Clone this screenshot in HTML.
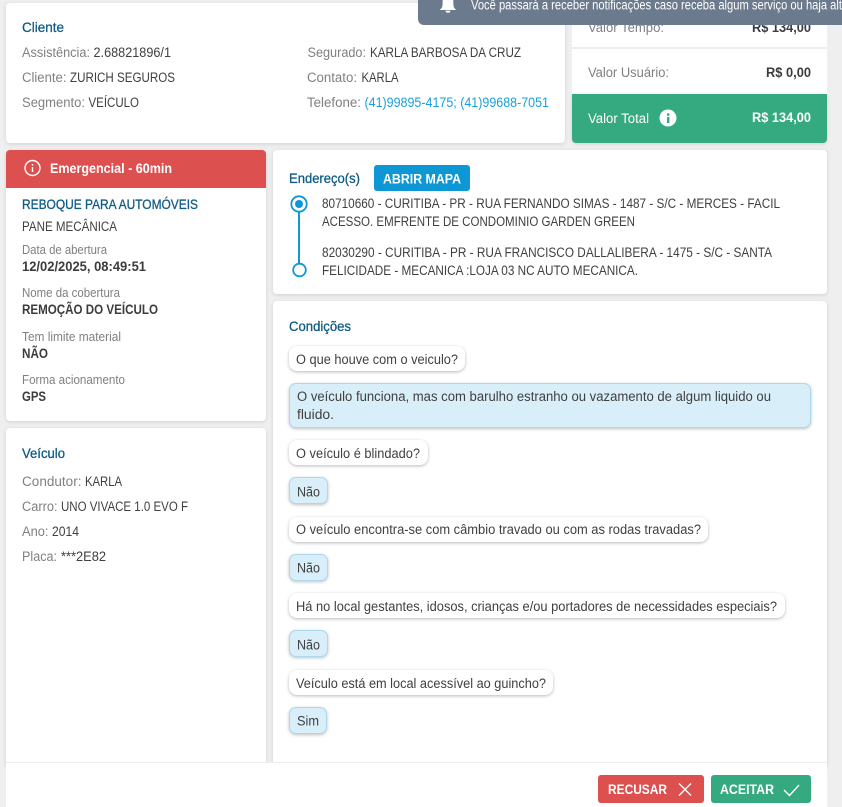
<!DOCTYPE html>
<html lang="pt-BR">
<head>
<meta charset="utf-8">
<title>Serviço</title>
<style>
html,body{margin:0;padding:0;width:842px;height:807px;overflow:hidden;background:#efefef}
body{position:relative;font-family:"Liberation Sans",sans-serif}
.c{position:absolute;background:#fff;border-radius:4px;box-shadow:0 1px 4px rgba(0,0,0,.12)}
.b{position:absolute;background:#fff;border-radius:8px;box-shadow:0 1px 3px rgba(0,0,0,.28)}
.a{position:absolute;background:#d8eef8;border:1px solid #acd9ee;box-sizing:border-box;border-radius:7px;box-shadow:0 1px 3px rgba(0,0,0,.25)}
svg{position:absolute;left:0;top:0}
text{font-family:"Liberation Sans",sans-serif;font-size:13.5px;fill:#404040}
.l{fill:#808080}
.s{font-size:12.5px;fill:#808080}
.B{font-weight:bold;fill:#3c3c3c}
.t{fill:#0f5c85;stroke:#0f5c85;stroke-width:.3px}
.w{fill:#fff;font-weight:bold}
.p{fill:#1a9fdb}
</style>
</head>
<body>
<div class="c" style="left:6px;top:3px;width:559px;height:140px"></div>
<div class="c" style="left:572px;top:0;width:255px;height:47px;box-shadow:none;border-radius:0"></div>
<div class="c" style="left:572px;top:49px;width:255px;height:45px;border-radius:0;box-shadow:none"></div>
<div class="c" style="left:572px;top:94px;width:255px;height:49px;background:#35aa80;border-radius:0 0 4px 4px"></div>
<div class="c" style="left:6px;top:150px;width:260px;height:271px"></div>
<div style="position:absolute;left:6px;top:150px;width:260px;height:38px;background:#dc5050;border-radius:4px 4px 0 0"></div>
<div class="c" style="left:6px;top:428px;width:260px;height:340px"></div>
<div class="c" style="left:273px;top:150px;width:554px;height:144px"></div>
<div class="c" style="left:273px;top:301px;width:554px;height:467px"></div>
<div style="position:absolute;left:6px;top:762px;width:821px;height:45px;background:#fff;border-top:1px solid #ececec;box-sizing:border-box"></div>
<div style="position:absolute;left:374px;top:165px;width:96px;height:26px;background:#0d98d5;border-radius:3px"></div>

<div class="b" style="left:289px;top:346px;width:176px;height:25px"></div>
<div class="a" style="left:289px;top:383px;width:522px;height:45px"></div>
<div class="b" style="left:289px;top:440px;width:139px;height:25px"></div>
<div class="a" style="left:289px;top:477px;width:39px;height:27px"></div>
<div class="b" style="left:289px;top:517px;width:419px;height:25px"></div>
<div class="a" style="left:289px;top:554px;width:39px;height:27px"></div>
<div class="b" style="left:289px;top:593px;width:496px;height:25px"></div>
<div class="a" style="left:289px;top:630px;width:39px;height:27px"></div>
<div class="b" style="left:289px;top:670px;width:264px;height:25px"></div>
<div class="a" style="left:289px;top:707px;width:38px;height:27px"></div>

<div style="position:absolute;left:598px;top:775px;width:106px;height:28px;background:#dc5050;border-radius:3px"></div>
<div style="position:absolute;left:711px;top:775px;width:100px;height:28px;background:#35aa80;border-radius:3px"></div>

<svg width="842" height="807" viewBox="0 0 842 807">
<!-- Cliente -->
<text x="22" y="32" class="t" textLength="42" lengthAdjust="spacingAndGlyphs">Cliente</text>
<text x="22" y="57" class="l" textLength="68" lengthAdjust="spacingAndGlyphs">Assistência:</text>
<text x="93.5" y="57" textLength="77.5" lengthAdjust="spacingAndGlyphs">2.68821896/1</text>
<text x="22" y="82" class="l" textLength="44.5" lengthAdjust="spacingAndGlyphs">Cliente:</text>
<text x="70" y="82" textLength="105" lengthAdjust="spacingAndGlyphs">ZURICH SEGUROS</text>
<text x="22" y="107" class="l" textLength="63" lengthAdjust="spacingAndGlyphs">Segmento:</text>
<text x="88.5" y="107" textLength="50.5" lengthAdjust="spacingAndGlyphs">VEÍCULO</text>
<text x="307.5" y="57" class="l" textLength="58.5" lengthAdjust="spacingAndGlyphs">Segurado:</text>
<text x="370" y="57" textLength="151" lengthAdjust="spacingAndGlyphs">KARLA BARBOSA DA CRUZ</text>
<text x="307" y="82" class="l" textLength="50" lengthAdjust="spacingAndGlyphs">Contato:</text>
<text x="361.5" y="82" textLength="37" lengthAdjust="spacingAndGlyphs">KARLA</text>
<text x="307" y="107" class="l" textLength="54" lengthAdjust="spacingAndGlyphs">Telefone:</text>
<text x="364.5" y="107" class="p" textLength="184.5" lengthAdjust="spacingAndGlyphs">(41)99895-4175; (41)99688-7051</text>
<!-- Valores -->
<text x="588" y="32" class="l" textLength="76" lengthAdjust="spacingAndGlyphs">Valor Tempo:</text>
<text x="752" y="32" class="B" textLength="59" lengthAdjust="spacingAndGlyphs">R$ 134,00</text>
<text x="588" y="77" class="l" textLength="81" lengthAdjust="spacingAndGlyphs">Valor Usuário:</text>
<text x="766" y="77" class="B" textLength="45" lengthAdjust="spacingAndGlyphs">R$ 0,00</text>
<text x="588" y="123" style="fill:#fff" textLength="61" lengthAdjust="spacingAndGlyphs">Valor Total</text>
<circle cx="668" cy="118" r="8.5" fill="#fff"/>
<rect x="667" y="117" width="2.4" height="6" fill="#35aa80"/>
<rect x="667" y="113.4" width="2.4" height="2.4" fill="#35aa80"/>
<text x="752" y="122" class="w" textLength="59" lengthAdjust="spacingAndGlyphs">R$ 134,00</text>
<!-- Barra notificação -->
<path d="M418 0H842V25H424a6 6 0 0 1-6-6Z" fill="#6c7a8d"/>
<path d="M440 10c0-.8 1.600-1.200 2.200-3 .5-1.800.4-5 .6-8h10.400c.2 3 .1 6.200.6 8 .6 1.800 2.200 2.200 2.200 3Z" fill="#fff"/>
<path d="M445.500 10.800h5c0 1.300-1 2-2.500 2s-2.500-.7-2.500-2Z" fill="#fff"/>
<text x="471" y="9.500" style="fill:#fff" textLength="371" lengthAdjust="spacingAndGlyphs">Você passará a receber notificações caso receba algum serviço ou haja alt</text>
<!-- Emergencial -->
<circle cx="32.500" cy="168" r="7.500" fill="none" stroke="#fff" stroke-width="1.400"/>
<rect x="31.800" y="164" width="1.400" height="1.600" fill="#fff"/>
<rect x="31.800" y="167" width="1.400" height="5" fill="#fff"/>
<text x="50" y="173" class="w" textLength="122" lengthAdjust="spacingAndGlyphs">Emergencial - 60min</text>
<text x="22" y="209" class="t" textLength="176" lengthAdjust="spacingAndGlyphs">REBOQUE PARA AUTOMÓVEIS</text>
<text x="22" y="231" textLength="95" lengthAdjust="spacingAndGlyphs">PANE MECÂNICA</text>
<text x="22" y="254" class="s" textLength="85" lengthAdjust="spacingAndGlyphs">Data de abertura</text>
<text x="22" y="271" class="B" textLength="124" lengthAdjust="spacingAndGlyphs">12/02/2025, 08:49:51</text>
<text x="22" y="297" class="s" textLength="98" lengthAdjust="spacingAndGlyphs">Nome da cobertura</text>
<text x="22" y="314" class="B" textLength="136" lengthAdjust="spacingAndGlyphs">REMOÇÃO DO VEÍCULO</text>
<text x="22" y="341" class="s" textLength="99" lengthAdjust="spacingAndGlyphs">Tem limite material</text>
<text x="22" y="358" class="B" textLength="26" lengthAdjust="spacingAndGlyphs">NÃO</text>
<text x="22" y="384" class="s" textLength="103" lengthAdjust="spacingAndGlyphs">Forma acionamento</text>
<text x="22" y="401" class="B" textLength="24" lengthAdjust="spacingAndGlyphs">GPS</text>
<!-- Veículo -->
<text x="22" y="458" class="t" textLength="43" lengthAdjust="spacingAndGlyphs">Veículo</text>
<text x="22" y="486" class="l" textLength="59.500" lengthAdjust="spacingAndGlyphs">Condutor:</text>
<text x="85" y="486" textLength="37" lengthAdjust="spacingAndGlyphs">KARLA</text>
<text x="22" y="511" class="l" textLength="35.500" lengthAdjust="spacingAndGlyphs">Carro:</text>
<text x="61" y="511" textLength="127" lengthAdjust="spacingAndGlyphs">UNO VIVACE 1.0 EVO F</text>
<text x="22" y="536" class="l" textLength="26.500" lengthAdjust="spacingAndGlyphs">Ano:</text>
<text x="52" y="536" textLength="27" lengthAdjust="spacingAndGlyphs">2014</text>
<text x="22" y="561" class="l" textLength="35" lengthAdjust="spacingAndGlyphs">Placa:</text>
<text x="61" y="561" textLength="45" lengthAdjust="spacingAndGlyphs">***2E82</text>
<!-- Endereço -->
<text x="289" y="183" class="t" textLength="71" lengthAdjust="spacingAndGlyphs">Endereço(s)</text>
<text x="383" y="183.500" class="w" textLength="78" lengthAdjust="spacingAndGlyphs">ABRIR MAPA</text>
<line x1="299" y1="211" x2="299" y2="264" stroke="#0d98d5" stroke-width="2"/>
<circle cx="299" cy="204" r="7.700" fill="#fff" stroke="#0d98d5" stroke-width="1.800"/>
<circle cx="299" cy="204" r="4" fill="#0d98d5"/>
<circle cx="299.500" cy="270" r="6.300" fill="#fff" stroke="#0d98d5" stroke-width="1.800"/>
<text x="322" y="208" textLength="458" lengthAdjust="spacingAndGlyphs">80710660 - CURITIBA - PR - RUA FERNANDO SIMAS - 1487 - S/C - MERCES - FACIL</text>
<text x="322" y="226" textLength="313" lengthAdjust="spacingAndGlyphs">ACESSO. EMFRENTE DE CONDOMINIO GARDEN GREEN</text>
<text x="322" y="257" textLength="450" lengthAdjust="spacingAndGlyphs">82030290 - CURITIBA - PR - RUA FRANCISCO DALLALIBERA - 1475 - S/C - SANTA</text>
<text x="322" y="275" textLength="316" lengthAdjust="spacingAndGlyphs">FELICIDADE - MECANICA :LOJA 03 NC AUTO MECANICA.</text>
<!-- Condições -->
<text x="289" y="331" class="t" textLength="62" lengthAdjust="spacingAndGlyphs">Condições</text>
<text x="296" y="364" textLength="162" lengthAdjust="spacingAndGlyphs">O que houve com o veiculo?</text>
<text x="297" y="401" textLength="474" lengthAdjust="spacingAndGlyphs">O veículo funciona, mas com barulho estranho ou vazamento de algum liquido ou</text>
<text x="297" y="419" textLength="37" lengthAdjust="spacingAndGlyphs">fluido.</text>
<text x="296" y="458" textLength="124" lengthAdjust="spacingAndGlyphs">O veículo é blindado?</text>
<text x="297" y="496.500" textLength="23" lengthAdjust="spacingAndGlyphs">Não</text>
<text x="296" y="534" textLength="405" lengthAdjust="spacingAndGlyphs">O veículo encontra-se com câmbio travado ou com as rodas travadas?</text>
<text x="297" y="572.500" textLength="23" lengthAdjust="spacingAndGlyphs">Não</text>
<text x="296" y="611" textLength="481" lengthAdjust="spacingAndGlyphs">Há no local gestantes, idosos, crianças e/ou portadores de necessidades especiais?</text>
<text x="297" y="649.500" textLength="23" lengthAdjust="spacingAndGlyphs">Não</text>
<text x="296" y="688" textLength="250" lengthAdjust="spacingAndGlyphs">Veículo está em local acessível ao guincho?</text>
<text x="297" y="725.500" textLength="22" lengthAdjust="spacingAndGlyphs">Sim</text>
<!-- Botões -->
<text x="608" y="794" class="w" textLength="59" lengthAdjust="spacingAndGlyphs">RECUSAR</text>
<path d="M679 783.500L691 795.500M691 783.500L679 795.500" stroke="#fff" stroke-width="1.400" fill="none"/>
<text x="720" y="794" class="w" textLength="54" lengthAdjust="spacingAndGlyphs">ACEITAR</text>
<path d="M784 790L789.500 795.500L799 785" stroke="#fff" stroke-width="1.400" fill="none"/>
</svg>
</body>
</html>
